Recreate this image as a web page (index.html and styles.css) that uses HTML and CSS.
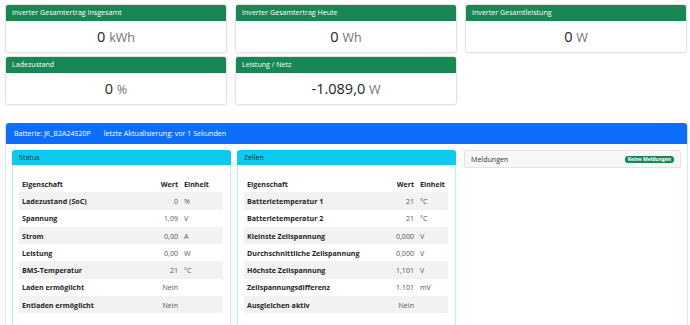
FILE: index.html
```html
<!DOCTYPE html>
<html lang="de">
<head>
    <meta charset="UTF-8">
    <title>Batterie Übersicht</title>
    <link rel="stylesheet" href="styles.css">
</head>
<body>
    <div class="tiles">
        <div class="tile">
            <div class="tile-head">Inverter Gesamtertrag Insgesamt</div>
            <div class="tile-body">0 <span class="unit">kWh</span></div>
        </div>
        <div class="tile">
            <div class="tile-head">Inverter Gesamtertrag Heute</div>
            <div class="tile-body">0 <span class="unit">Wh</span></div>
        </div>
        <div class="tile">
            <div class="tile-head">Inverter Gesamtleistung</div>
            <div class="tile-body">0 <span class="unit">W</span></div>
        </div>
        <div class="tile">
            <div class="tile-head">Ladezustand</div>
            <div class="tile-body">0 <span class="unit">%</span></div>
        </div>
        <div class="tile">
            <div class="tile-head">Leistung / Netz</div>
            <div class="tile-body">-1.089,0 <span class="unit">W</span></div>
        </div>
    </div>

    <div class="battery">
        <div class="battery-head">
            <span>Batterie: JK_B2A24S20P</span>
            <span>letzte Aktualisierung: vor 1 Sekunden</span>
        </div>
        <div class="battery-body">
            <div class="panel">
                <div class="panel-head">Status</div>
                <div class="panel-body">
                    <table class="props status">
                        <tr><th>Eigenschaft</th><th class="num">Wert</th><th>Einheit</th></tr>
                        <tr><td>Ladezustand (SoC)</td><td class="num">0</td><td>%</td></tr>
                        <tr><td>Spannung</td><td class="num">1,09</td><td>V</td></tr>
                        <tr><td>Strom</td><td class="num">0,00</td><td>A</td></tr>
                        <tr><td>Leistung</td><td class="num">0,00</td><td>W</td></tr>
                        <tr><td>BMS-Temperatur</td><td class="num">21</td><td>°C</td></tr>
                        <tr><td>Laden ermöglicht</td><td class="num">Nein</td><td></td></tr>
                        <tr><td>Entladen ermöglicht</td><td class="num">Nein</td><td></td></tr>
                    </table>
                </div>
            </div>
            <div class="panel">
                <div class="panel-head">Zellen</div>
                <div class="panel-body">
                    <table class="props cells">
                        <tr><th>Eigenschaft</th><th class="num">Wert</th><th>Einheit</th></tr>
                        <tr><td>Batterietemperatur 1</td><td class="num">21</td><td>°C</td></tr>
                        <tr><td>Batterietemperatur 2</td><td class="num">21</td><td>°C</td></tr>
                        <tr><td>Kleinste Zellspannung</td><td class="num">0,000</td><td>V</td></tr>
                        <tr><td>Durchschnittliche Zellspannung</td><td class="num">0,000</td><td>V</td></tr>
                        <tr><td>Höchste Zellspannung</td><td class="num">1,101</td><td>V</td></tr>
                        <tr><td>Zellspannungsdifferenz</td><td class="num">1.101</td><td>mV</td></tr>
                        <tr><td>Ausgleichen aktiv</td><td class="num">Nein</td><td></td></tr>
                    </table>
                </div>
            </div>
            <div class="messages">
                <span>Meldungen</span>
                <span class="badge">Keine Meldungen</span>
            </div>
        </div>
    </div>
</body>
</html>
```

FILE: styles.css
```css
body {
    margin: 0;
    padding: 4px 2px 0 5px;
    font-family: "Open Sans", "Noto Sans", sans-serif;
    font-size: 7.1px;
    color: #212529;
    background-color: #fff;
    overflow: hidden;
    height: 325px;
    box-sizing: border-box;
}

.tiles {
    display: grid;
    grid-template-columns: repeat(3, 222px);
    column-gap: 8px;
    row-gap: 3px;
}

.tile {
    border: 1px solid #e3e3e3;
    border-radius: 3px;
    overflow: hidden;
    box-shadow: 0 1px 2px rgba(0, 0, 0, 0.05);
}

.tile-head {
    background-color: #198754;
    color: #fff;
    height: 17px;
    line-height: 17px;
    padding: 0 7px;
    margin: -1px -1px 0;
}

.tile-body {
    height: 31px;
    line-height: 31px;
    text-align: center;
    font-size: 14.5px;
    color: #212529;
}

.unit {
    color: #6c757d;
    font-size: 12.5px;
}

.battery {
    margin-top: 18px;
    border: 1px solid #dbe6f5;
    border-top: none;
    border-radius: 3px;
}

.battery-head {
    background-color: #0d6efd;
    color: #fff;
    height: 21px;
    line-height: 21px;
    padding: 0 8px;
    border-radius: 3px 3px 0 0;
    display: flex;
    gap: 13px;
}

.battery-body {
    padding: 6px 6px 0;
    display: grid;
    grid-template-columns: repeat(3, 219px);
    column-gap: 6px;
    align-items: start;
}

.panel {
    border: 1px solid #b9ebf5;
    border-radius: 3px;
    height: 190px;
}

.panel-head {
    background-color: #0dcaf0;
    color: #1b2a33;
    height: 15px;
    line-height: 15px;
    padding: 0 7px;
    margin: -1px -1px 0;
    border-radius: 3px 3px 0 0;
}

.panel-body {
    padding: 10px 7px 0 6px;
}

.props {
    width: 204px;
    border-collapse: collapse;
    table-layout: fixed;
}

.props th,
.props td {
    height: 17.3px;
    padding: 0 3px;
    text-align: left;
    white-space: nowrap;
    overflow: hidden;
}

.props th {
    font-weight: 700;
}

.props td:first-child {
    font-weight: 700;
}

.props td.num,
.props td:last-child {
    color: #555;
}

.props .num {
    text-align: right;
}

.props tr:nth-child(even) td {
    background-color: #f2f2f2;
}

.status th:first-child { width: 119px; }
.status th:nth-child(2) { width: 31px; }

.cells th:first-child { width: 129px; }
.cells th:nth-child(2) { width: 32px; }

.messages {
    margin-left: 2px;
    height: 16px;
    border: 1px solid #ecdfdf;
    border-radius: 2px;
    background-color: #f7f7f7;
    color: #333;
    display: flex;
    align-items: center;
    justify-content: space-between;
    padding: 0 6px 0 6px;
}

.badge {
    background-color: #198754;
    color: #fff;
    font-size: 5px;
    font-weight: 700;
    padding: 1px 3px;
    border-radius: 3px;
    line-height: 5px;
}
```
